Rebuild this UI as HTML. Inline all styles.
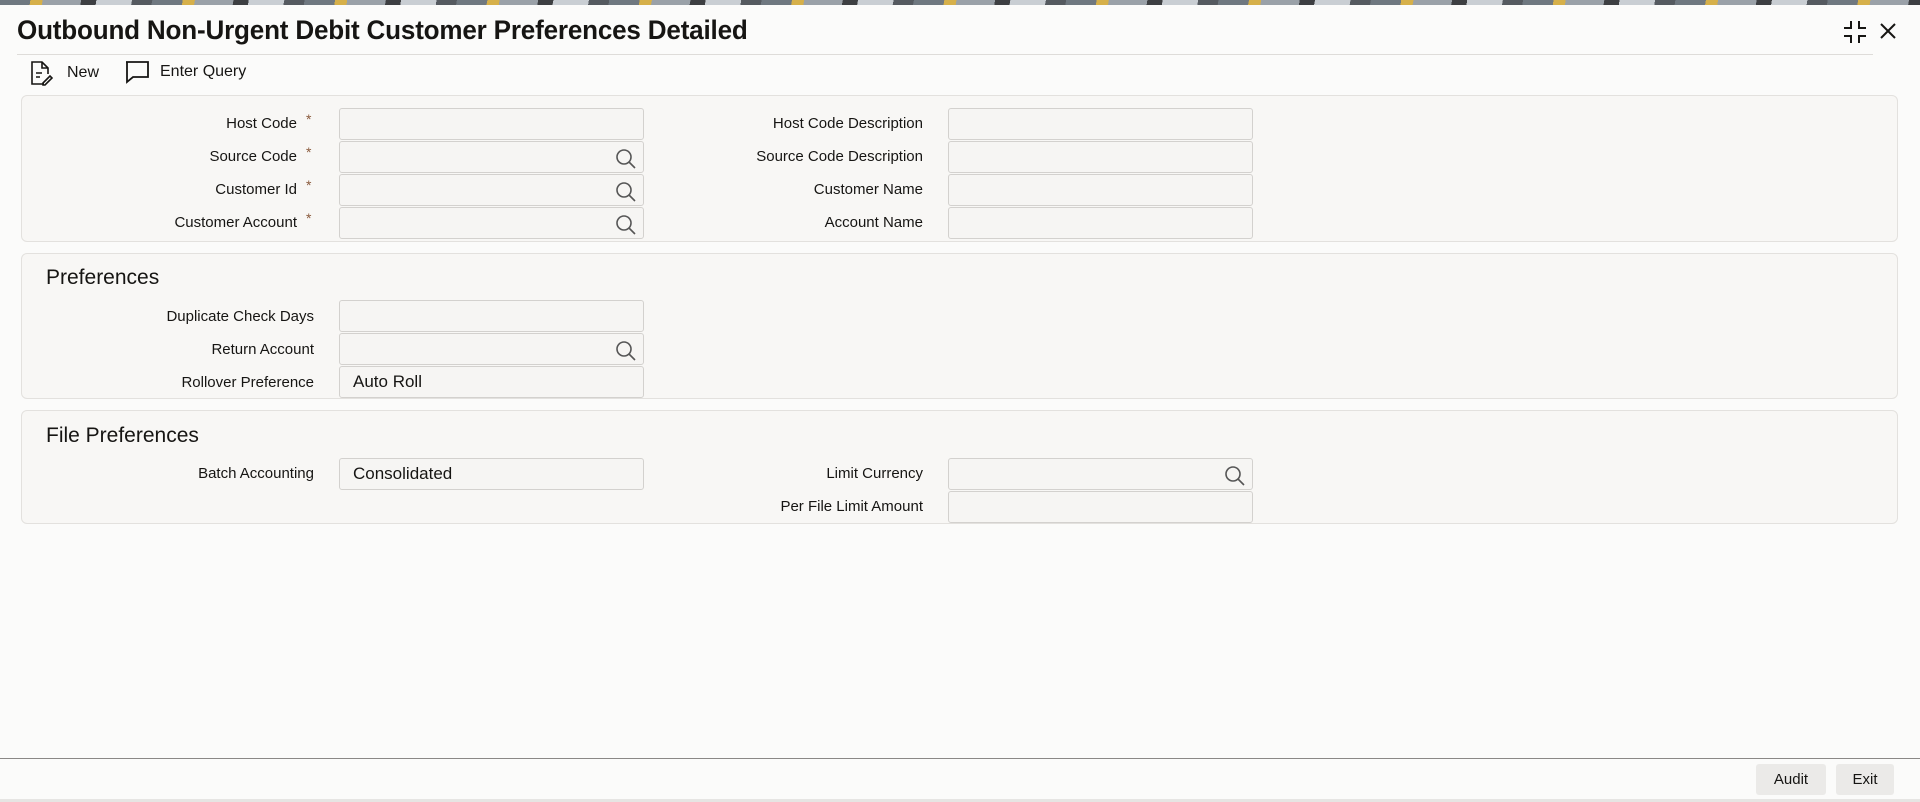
<!DOCTYPE html>
<html><head><meta charset="utf-8"><style>
*{box-sizing:border-box;margin:0;padding:0}
body{width:1920px;height:802px;overflow:hidden;background:#fbfbfa;font-family:"Liberation Sans",sans-serif;color:#161513;position:relative}
.banner{position:absolute;left:0;top:0;width:1920px;height:5px;background:repeating-linear-gradient(100deg,#6f7880 0 30px,#d6b04a 30px 42px,#9aa1a8 42px 80px,#3d3f42 80px 95px,#c9ced3 95px 130px,#555a60 130px 150px)}
.title{position:absolute;left:17px;top:15px;font-size:27px;font-weight:bold;white-space:nowrap;transform:scaleX(0.965);transform-origin:left top;letter-spacing:-0.2px}
.sep{position:absolute;left:17px;top:54px;width:1856px;height:1px;background:#dedcd9}
.tb{position:absolute;top:60px;font-size:16px;display:flex;align-items:center}
.panel{position:absolute;left:21px;width:1877px;background:#f8f7f5;border:1px solid #e3e1de;border-radius:6px}
.lbl{position:absolute;font-size:15px;text-align:right;white-space:nowrap}
.ast{position:absolute;font-size:14px;color:#8a5a3c}
.fld{position:absolute;height:32px;border:1px solid #d3d1ce;border-radius:3px;background:#f6f5f3;font-size:17px;padding-left:13px;line-height:30px}
.h{position:absolute;left:46px;font-size:21px}
.srch{position:absolute;right:6px;top:6px}
.btn{position:absolute;top:764px;height:31px;background:#ebeae8;border-radius:3px;font-size:15px;text-align:center;line-height:31px}
</style></head><body>
<div class="banner"></div>
<div class="title">Outbound Non-Urgent Debit Customer Preferences Detailed</div>
<svg style="position:absolute;left:1843px;top:20px" width="24" height="24" viewBox="0 0 24 24" fill="none" stroke="#161513" stroke-width="2"><path d="M8 1v7H1M16 1v7h7M8 23v-7H1M16 23v-7h7"/></svg>
<svg style="position:absolute;left:1878px;top:21px" width="20" height="20" viewBox="0 0 20 20" stroke="#161513" stroke-width="2"><path d="M3 3l14 14M17 3L3 17"/></svg>
<div class="sep"></div>
<div class="tb" style="left:29px"><svg width="24" height="26" viewBox="0 0 24 26" fill="none" stroke="#161513" stroke-width="1.6"><path d="M15 24H3V2h10l6 6v6"/><path d="M13 2v6h6"/><path d="M7 13h6M7 17h4"/><path d="M14 23l7-7 2 2-7 7h-2z"/></svg><span style="margin-left:14px">New</span></div>
<div class="tb" style="left:124px"><svg width="26" height="24" viewBox="0 0 26 24" fill="none" stroke="#161513" stroke-width="1.8"><path d="M2 2h22v15H9l-6 5V2"/></svg><span style="margin-left:10px">Enter Query</span></div>

<div class="panel" style="top:95px;height:147px"></div>
<div class="panel" style="top:253px;height:146px"></div>
<div class="panel" style="top:410px;height:114px"></div>

<div class="lbl" style="right:1623px;top:115px">Host Code</div><div class="ast" style="left:306px;top:111px">*</div>
<div class="lbl" style="right:1623px;top:148px">Source Code</div><div class="ast" style="left:306px;top:144px">*</div>
<div class="lbl" style="right:1623px;top:181px">Customer Id</div><div class="ast" style="left:306px;top:177px">*</div>
<div class="lbl" style="right:1623px;top:214px">Customer Account</div><div class="ast" style="left:306px;top:210px">*</div>
<div class="fld" style="left:339px;top:108px;width:305px"></div>
<div class="fld" style="left:339px;top:141px;width:305px"><svg class="srch" width="22" height="22" viewBox="0 0 22 22" fill="none" stroke="#555" stroke-width="1.6"><circle cx="9" cy="9" r="7"/><path d="M14 14l6 6"/></svg></div>
<div class="fld" style="left:339px;top:174px;width:305px"><svg class="srch" width="22" height="22" viewBox="0 0 22 22" fill="none" stroke="#555" stroke-width="1.6"><circle cx="9" cy="9" r="7"/><path d="M14 14l6 6"/></svg></div>
<div class="fld" style="left:339px;top:207px;width:305px"><svg class="srch" width="22" height="22" viewBox="0 0 22 22" fill="none" stroke="#555" stroke-width="1.6"><circle cx="9" cy="9" r="7"/><path d="M14 14l6 6"/></svg></div>
<div class="lbl" style="right:997px;top:115px">Host Code Description</div>
<div class="lbl" style="right:997px;top:148px">Source Code Description</div>
<div class="lbl" style="right:997px;top:181px">Customer Name</div>
<div class="lbl" style="right:997px;top:214px">Account Name</div>
<div class="fld" style="left:948px;top:108px;width:305px"></div>
<div class="fld" style="left:948px;top:141px;width:305px"></div>
<div class="fld" style="left:948px;top:174px;width:305px"></div>
<div class="fld" style="left:948px;top:207px;width:305px"></div>

<div class="h" style="top:266px">Preferences</div>
<div class="lbl" style="right:1606px;top:308px">Duplicate Check Days</div>
<div class="lbl" style="right:1606px;top:341px">Return Account</div>
<div class="lbl" style="right:1606px;top:374px">Rollover Preference</div>
<div class="fld" style="left:339px;top:300px;width:305px"></div>
<div class="fld" style="left:339px;top:333px;width:305px"><svg class="srch" width="22" height="22" viewBox="0 0 22 22" fill="none" stroke="#555" stroke-width="1.6"><circle cx="9" cy="9" r="7"/><path d="M14 14l6 6"/></svg></div>
<div class="fld" style="left:339px;top:366px;width:305px">Auto Roll</div>

<div class="h" style="top:424px">File Preferences</div>
<div class="lbl" style="right:1606px;top:465px">Batch Accounting</div>
<div class="fld" style="left:339px;top:458px;width:305px">Consolidated</div>
<div class="lbl" style="right:997px;top:465px">Limit Currency</div>
<div class="lbl" style="right:997px;top:498px">Per File Limit Amount</div>
<div class="fld" style="left:948px;top:458px;width:305px"><svg class="srch" width="22" height="22" viewBox="0 0 22 22" fill="none" stroke="#555" stroke-width="1.6"><circle cx="9" cy="9" r="7"/><path d="M14 14l6 6"/></svg></div>
<div class="fld" style="left:948px;top:491px;width:305px"></div>

<div style="position:absolute;left:0;top:758px;width:1920px;height:1px;background:#8a8886"></div>
<div class="btn" style="left:1756px;width:70px">Audit</div>
<div class="btn" style="left:1836px;width:58px">Exit</div>
<div style="position:absolute;left:0;top:799px;width:1920px;height:3px;background:#e6e5e3"></div>
</body></html>
